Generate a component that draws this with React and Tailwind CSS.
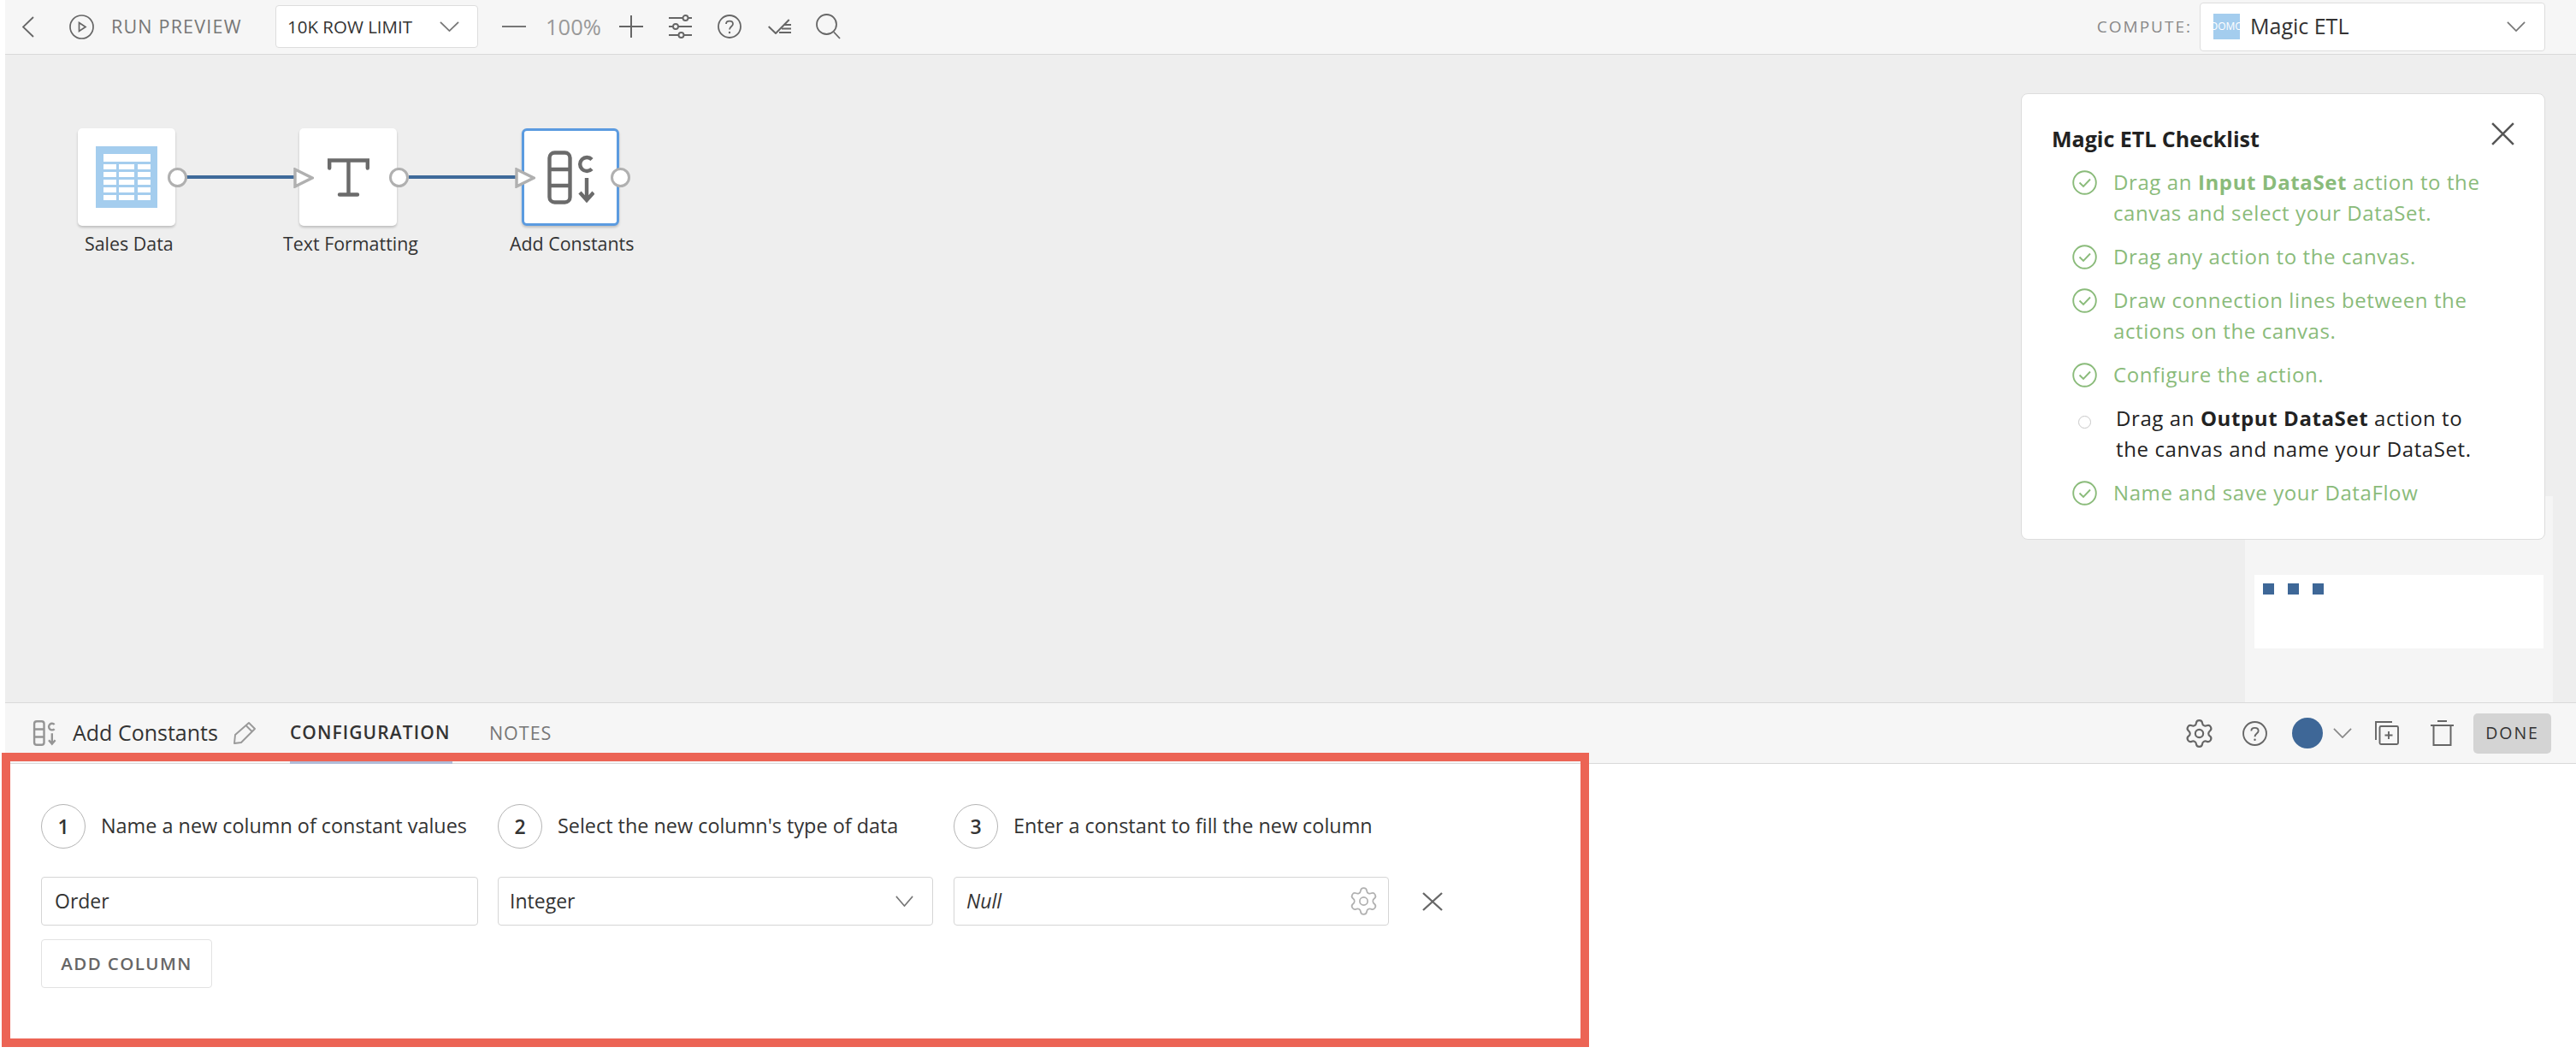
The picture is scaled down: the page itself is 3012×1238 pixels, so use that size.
import React from 'react';
import { Settings } from 'lucide-react';

const Chevron = ({ className }) => (
  <svg viewBox="0 0 24 14" fill="none" stroke="currentColor" strokeWidth="1.8" className={className} preserveAspectRatio="none">
    <path d="M1 1 L12 13 L23 1" />
  </svg>
);

const X = ({ className }) => (
  <svg viewBox="0 0 24 24" fill="none" stroke="currentColor" strokeWidth="2.2" className={className} preserveAspectRatio="none">
    <path d="M1 1 L23 23 M23 1 L1 23" />
  </svg>
);

const Help = ({ className }) => (
  <svg viewBox="0 0 28 28" fill="none" stroke="currentColor" strokeWidth="1.8" className={className}>
    <circle cx="14" cy="14" r="13" />
    <path d="M10 11 C10 6.5 18 6.5 18 11 C18 14 14 14 14 17.5" />
    <circle cx="14" cy="21" r="1.2" fill="currentColor" stroke="none" />
  </svg>
);

const Constants = ({ className, w = 4.4 }) => (
  <svg viewBox="0 0 55 63" fill="none" stroke="currentColor" strokeWidth={w} className={className}>
    <rect x="2.5" y="2.5" width="24" height="58" rx="6" />
    <path d="M2.5 22 H26.5 M2.5 41 H26.5" />
    <path d="M52 10.5 A8 8 0 1 0 52 21.5" />
    <path d="M46 32 V58 M38 49 L46 58 L54 49" />
  </svg>
);

const Tri = ({ className }) => (
  <svg viewBox="0 0 24 24" className={className}>
    <path d="M2 2 L22 12 L2 22 Z" fill="#ffffff" stroke="#b0b0b0" strokeWidth="3.4" />
  </svg>
);

const Port = ({ className }) => (
  <div className={`absolute h-[23px] w-[23px] rounded-full border-[3px] border-[#b0b0b0] bg-white ${className}`} />
);

const Check = () => (
  <svg viewBox="0 0 29 29" fill="none" stroke="#8abb7a" strokeWidth="1.9" className="h-[29px] w-[29px]">
    <circle cx="14.5" cy="14.5" r="13.3" />
    <path d="M8.5 14.5 L13 19 L21 10.5" />
  </svg>
);

const Step = ({ n, children, className }) => (
  <div className={`flex h-[52px] items-center ${className}`}>
    <div className="flex h-[52px] w-[52px] shrink-0 items-center justify-center rounded-full border border-[#b5b5b5] text-[23px] font-semibold text-[#333333]">{n}</div>
    <div className="ml-[18px] whitespace-nowrap text-[23.4px] text-[#333333]">{children}</div>
  </div>
);

const Item = ({ children, done = true }) => (
  <div className={`flex leading-[36px] ${done ? 'text-[#8abb7a]' : 'text-[#222222]'}`}>
    <div className="ml-[24px] flex h-[36px] w-[29px] shrink-0 items-center justify-center">
      {done ? <Check /> : <div className="mt-[8px] h-[15px] w-[15px] rounded-full border border-[#c8c8c8]" />}
    </div>
    <div className={`w-[440px] text-[24px] tracking-[0.6px] ${done ? 'ml-[19px]' : 'ml-[22px]'}`}>{children}</div>
  </div>
);

export default function App() {
  return (
    <div className="relative flex h-[1238px] w-[3012px] overflow-hidden bg-white pl-[6px] font-['Open_Sans',sans-serif]">
      <div className="flex min-w-0 flex-1 flex-col">
        {/* Toolbar */}
        <div className="flex h-[64px] shrink-0 items-center border-b border-[#d9d9d9] bg-[#f6f6f6] pb-[1px]">
          <svg viewBox="0 0 14 25" fill="none" stroke="#666666" strokeWidth="1.8" className="ml-[20px] h-[25px] w-[14px]">
            <path d="M13 1 L1 12.5 L13 24" />
          </svg>
          <svg viewBox="0 0 29 29" fill="none" stroke="#666666" strokeWidth="1.7" className="ml-[41px] h-[29px] w-[29px]">
            <circle cx="14.5" cy="14.5" r="13.5" />
            <path d="M11.5 9.5 L19 14.5 L11.5 19.5 Z" />
          </svg>
          <div className="ml-[20px] w-[153px] whitespace-nowrap text-[21.5px] tracking-[1.2px] text-[#777777]">RUN PREVIEW</div>
          <div className="ml-[39px] flex h-[50px] w-[237px] items-center rounded-[4px] border border-[#dddddd] bg-white pl-[13px]">
            <div className="w-[164px] whitespace-nowrap text-[20.5px] font-medium text-[#333333]">10K ROW LIMIT</div>
            <Chevron className="ml-[14px] h-[12px] w-[23px] text-[#777777]" />
          </div>
          <div className="ml-[28px] h-[2px] w-[28px] bg-[#777777]" />
          <div className="ml-[23px] w-[63px] whitespace-nowrap text-[25.5px] text-[#999999]">100%</div>
          <svg viewBox="0 0 28 26" fill="none" stroke="#666666" strokeWidth="2" className="ml-[23px] h-[26px] w-[28px]">
            <path d="M14 0 V26 M0 13 H28" />
          </svg>
          <svg viewBox="0 0 27 28" fill="none" stroke="#666666" strokeWidth="1.9" className="ml-[30px] h-[28px] w-[27px]">
            <path d="M0 4 H16.5 M22.5 4 H27 M0 14 H5 M11 14 H27 M0 24 H11.5 M17.5 24 H27" />
            <circle cx="19.5" cy="4" r="3" />
            <circle cx="8" cy="14" r="3" />
            <circle cx="14.5" cy="24" r="3" />
          </svg>
          <Help className="ml-[30px] h-[28px] w-[28px] text-[#666666]" />
          <svg viewBox="0 0 27 18" fill="none" stroke="#666666" strokeWidth="2" className="ml-[31px] h-[18px] w-[27px]">
            <path d="M0.7 9 L9 17 L24.7 1" />
            <path d="M19 7 H27 M16 11.5 H27 M13 16 H27" strokeWidth="1.8" />
          </svg>
          <svg viewBox="0 0 29 30" fill="none" stroke="#666666" strokeWidth="1.8" className="ml-[29px] h-[30px] w-[29px]">
            <circle cx="12.5" cy="12.5" r="11.5" />
            <path d="M21 21.5 L28 29" />
          </svg>
          <div className="ml-auto flex items-center">
            <div className="whitespace-nowrap text-[19px] tracking-[2px] text-[#888888]">COMPUTE:</div>
            <div className="ml-[9px] mr-[36px] flex h-[57px] w-[404px] items-center rounded-[4px] border border-[#dddddd] bg-white pl-[15px]">
              <div className="flex h-[30px] w-[31px] items-center justify-center overflow-hidden whitespace-nowrap bg-[#a4cdee] text-[12px] text-white">DOMO</div>
              <div className="ml-[12px] whitespace-nowrap text-[25px] text-[#333333]">Magic ETL</div>
              <Chevron className="ml-auto mr-[22px] h-[12px] w-[22px] text-[#777777]" />
            </div>
          </div>
        </div>

        {/* Canvas */}
        <div className="relative h-[757px] shrink-0 bg-[#eeeeee]">
          <div className="absolute left-[85px] top-[86px] flex h-[114px] w-[114px] items-center justify-center rounded-[5px] bg-white shadow-[0_2px_3px_rgba(0,0,0,0.2)]">
            <svg viewBox="0 0 72 72" className="h-[72px] w-[72px]">
              <rect width="72" height="72" fill="#a4cdee" />
              <rect x="9" y="9" width="55" height="9" fill="#ffffff" />
              {[21, 30, 39, 48, 57].map((y) => (
                <g key={y} fill="#ffffff">
                  <rect x="9" y={y} width="15" height="6" />
                  <rect x="27" y={y} width="18" height="6" />
                  <rect x="49" y={y} width="15" height="6" />
                </g>
              ))}
            </svg>
          </div>
          <div className="absolute left-[344px] top-[86px] flex h-[114px] w-[114px] items-center justify-center rounded-[5px] bg-white shadow-[0_2px_3px_rgba(0,0,0,0.2)]">
            <svg viewBox="0 0 49 45" fill="none" stroke="#6b6b6b" strokeWidth="4.4" strokeLinecap="round" className="h-[45px] w-[49px]">
              <path d="M2.2 11.5 V2.5 H46.8 V11.5 M24.5 2.5 V42.5 M14 42.5 H35" />
            </svg>
          </div>
          <div className="absolute left-[604px] top-[86px] flex h-[114px] w-[114px] items-center justify-center rounded-[6px] border-[3px] border-[#5b9be0] bg-white shadow-[0_2px_3px_rgba(0,0,0,0.2)]">
            <Constants className="h-[63px] w-[55px] text-[#6b6b6b]" />
          </div>

          <div className="absolute left-[212px] top-[141px] h-[4px] w-[128px] bg-[#3f6a9a]" />
          <div className="absolute left-[472px] top-[141px] h-[4px] w-[128px] bg-[#3f6a9a]" />
          <Tri className="absolute left-[337px] top-[132px] h-[24px] w-[24px]" />
          <Tri className="absolute left-[596px] top-[132px] h-[24px] w-[24px]" />
          <Port className="left-[190px] top-[132px]" />
          <Port className="left-[449px] top-[132px]" />
          <Port className="left-[708px] top-[132px]" />

          <div className="absolute left-[93px] top-[206px] whitespace-nowrap text-[21.4px] leading-[30px] text-[#333333]">Sales Data</div>
          <div className="absolute left-[325px] top-[206px] whitespace-nowrap text-[21.4px] leading-[30px] text-[#333333]">Text Formatting</div>
          <div className="absolute left-[590px] top-[206px] whitespace-nowrap text-[21.4px] leading-[30px] text-[#333333]">Add Constants</div>

          {/* Preview peek behind the checklist */}
          <div className="absolute left-[2619px] top-[516px] h-[241px] w-[360px] bg-[#f5f5f5] px-[11px] pt-[92px]">
            <div className="flex h-[86px] gap-[16px] bg-white pl-[10px] pt-[10px]">
              <div className="h-[13px] w-[13px] bg-[#3e6797]" />
              <div className="h-[13px] w-[13px] bg-[#3e6797]" />
              <div className="h-[13px] w-[13px] bg-[#3e6797]" />
            </div>
          </div>

          {/* Checklist */}
          <div className="absolute left-[2357px] top-[45px] h-[522px] w-[613px] rounded-[8px] border border-[#dddddd] bg-white pl-[35px] pt-[34px]">
            <div className="text-[25px] font-bold leading-[36px] text-[#222222]">Magic ETL Checklist</div>
            <X className="absolute left-[549px] top-[33px] h-[27px] w-[27px] text-[#555555]" />
            <div className="mt-[15px] flex flex-col gap-[15px]">
              <Item>Drag an <b>Input DataSet</b> action to the canvas and select your DataSet.</Item>
              <Item>Drag any action to the canvas.</Item>
              <Item>Draw connection lines between the actions on the canvas.</Item>
              <Item>Configure the action.</Item>
              <Item done={false}>Drag an <b>Output DataSet</b> action to the canvas and name your DataSet.</Item>
              <Item>Name and save your DataFlow</Item>
            </div>
          </div>
        </div>

        {/* Action bar */}
        <div className="flex h-[72px] shrink-0 items-center border-y border-[#d9d9d9] bg-[#f6f6f6]">
          <Constants w={5} className="ml-[32px] h-[30px] w-[28px] text-[#959595]" />
          <div className="ml-[19px] whitespace-nowrap text-[25px] text-[#333333]">Add Constants</div>
          <svg viewBox="0 0 26 26" fill="none" stroke="#999999" strokeWidth="1.9" strokeLinejoin="round" className="ml-[18px] h-[26px] w-[26px]">
            <path d="M1 25 L2 15 L18 1 L25 8 L9 24 Z M14.5 4 L21.5 11" />
          </svg>
          <div className="relative ml-[40px] flex h-full w-[190px] items-center">
            <div className="whitespace-nowrap text-[21px] font-semibold tracking-[1.1px] text-[#333333]">CONFIGURATION</div>
            <div className="absolute bottom-[-1px] left-0 h-[3px] w-full bg-[#b0bcd8]" />
          </div>
          <div className="ml-[43px] whitespace-nowrap text-[21.5px] tracking-[1px] text-[#777777]">NOTES</div>

          <Settings strokeWidth={1.4} className="ml-auto h-[37px] w-[37px] text-[#666666]" />
          <Help className="ml-[32px] h-[29px] w-[29px] text-[#666666]" />
          <div className="ml-[29px] h-[36px] w-[36px] rounded-full bg-[#3e6797]" />
          <Chevron className="ml-[12px] h-[12px] w-[22px] text-[#888888]" />
          <svg viewBox="0 0 28 28" fill="none" stroke="#666666" strokeWidth="1.9" className="ml-[27px] h-[28px] w-[28px]">
            <path d="M1 22 V1 H20" />
            <rect x="5.5" y="6" width="21.5" height="21" rx="1.5" />
            <path d="M16 12 V21 M11.5 16.5 H20.5" />
          </svg>
          <svg viewBox="0 0 27 30" fill="none" stroke="#666666" strokeWidth="2" className="ml-[37px] h-[30px] w-[27px]">
            <path d="M8 1 H19 M0 6 H27 M3.5 6 V29 H23.5 V6" />
          </svg>
          <div className="ml-[23px] mr-[29px] flex h-[47px] w-[91px] items-center justify-center rounded-[5px] bg-[#d4d4d4] text-[19.5px] font-medium tracking-[1.9px] text-[#333333]">DONE</div>
        </div>

        {/* Config body */}
        <div className="flex-1 bg-white pl-[42px] pt-[47px]">
          <div className="flex">
            <Step n="1" className="w-[534px]">Name a new column of constant values</Step>
            <Step n="2" className="w-[533px]">Select the new column's type of data</Step>
            <Step n="3">Enter a constant to fill the new column</Step>
          </div>
          <div className="mt-[33px] flex items-center">
            <div className="flex h-[57px] w-[511px] items-center rounded-[4px] border border-[#d5d5d5] pl-[15px] text-[23px] text-[#333333]">Order</div>
            <div className="ml-[23px] flex h-[57px] w-[509px] items-center rounded-[4px] border border-[#d5d5d5] pl-[13px] text-[23px] text-[#333333]">
              Integer
              <Chevron className="ml-auto mr-[22px] h-[13px] w-[21px] text-[#777777]" />
            </div>
            <div className="ml-[24px] flex h-[57px] w-[509px] items-center rounded-[4px] border border-[#d5d5d5] pl-[14px] text-[23px] italic text-[#333333]">
              Null
              <Settings strokeWidth={1.1} className="ml-auto mr-[10px] h-[37px] w-[37px] text-[#b0b0b0]" />
            </div>
            <X className="ml-[39px] h-[22px] w-[24px] text-[#666666]" />
          </div>
          <div className="mt-[16px] flex h-[57px] w-[200px] items-center justify-center rounded-[4px] border border-[#e2e2e2] text-[20.5px] font-semibold tracking-[1.4px] text-[#666666]">ADD COLUMN</div>
        </div>
      </div>

      {/* Annotation rectangle */}
      <div className="pointer-events-none absolute left-[2px] top-[880px] h-[344px] w-[1856px] border-[10px] border-[#ec6455]" />
    </div>
  );
}
